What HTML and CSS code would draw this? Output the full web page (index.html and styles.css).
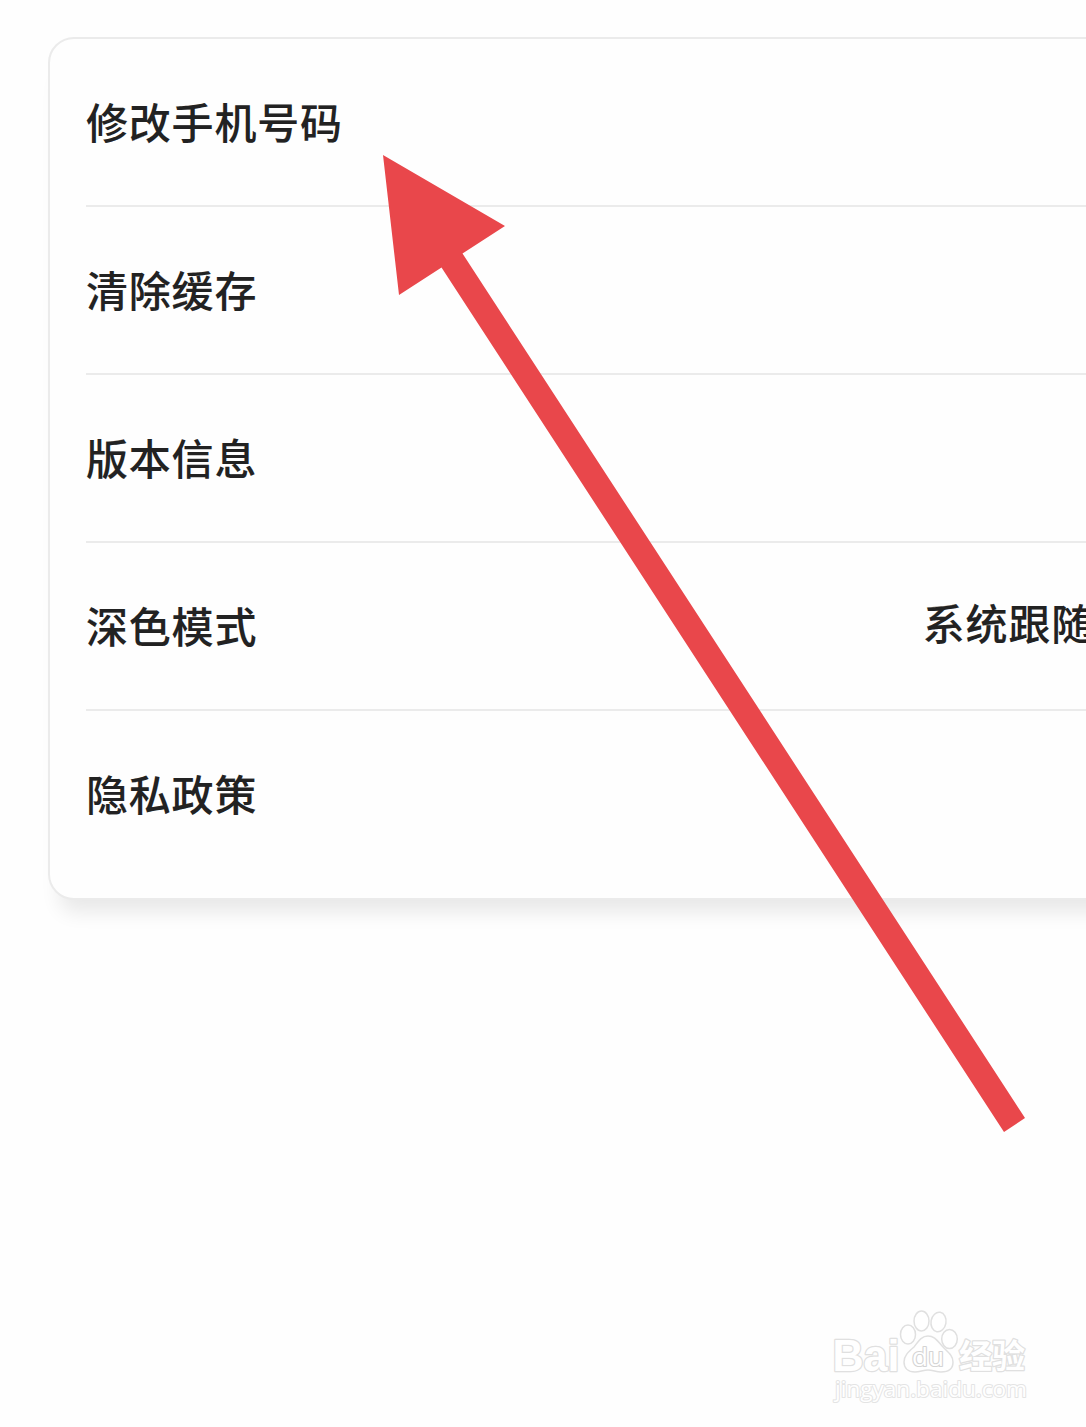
FILE: index.html
```html
<!DOCTYPE html>
<html lang="zh-CN">
<head>
  <meta charset="UTF-8">
  <meta name="viewport" content="width=device-width, initial-scale=1.0">
  <title>设置</title>
  <link rel="stylesheet" href="styles.css">
</head>
<body>

  <main class="screen">
    <ul class="settings-card">
      <li class="settings-row"><span class="row-label">修改手机号码</span></li>
      <li class="settings-row"><span class="row-label">清除缓存</span></li>
      <li class="settings-row"><span class="row-label">版本信息</span></li>
      <li class="settings-row">
        <span class="row-label">深色模式</span>
        <span class="row-value">系统跟随</span>
      </li>
      <li class="settings-row"><span class="row-label">隐私政策</span></li>
    </ul>

    <!-- Flèche -->
    <svg class="arrow" viewBox="0 0 1086 1427" aria-hidden="true">
      <path d="M383 155 L505 226 L462.500 253.500 L1025 1118 L1004 1132 L441.500 267.500 L399 295 Z"/>
    </svg>

    <!-- Logo -->
    <svg class="watermark" viewBox="0 0 220 115">
      <text x="12.500" y="71" textLength="67" lengthAdjust="spacingAndGlyphs" class="logo-latin">Bai</text>
      <text x="139" y="68" textLength="66" lengthAdjust="spacingAndGlyphs" class="logo-cjk">经验</text>
      <g class="logo-paw">
        <ellipse cx="88" cy="34.500" rx="7.500" ry="9.500"/>
        <ellipse cx="101.500" cy="21" rx="7.500" ry="10"/>
        <ellipse cx="118.500" cy="22" rx="7.500" ry="9.800" transform="rotate(10 118.500 22)"/>
        <ellipse cx="129.500" cy="39" rx="7.800" ry="9.500"/>
        <path d="M108 36 C115 36 118 42 123 47 C129 53 133 56 133 62 C133 69 128 72 121 72 C116 72 113 70 108 70 C103 70 100 72 95 72 C88 72 84 68 84 62 C84 56 88 52 94 47 C98 42 101 36 108 36 Z"/>
      </g>
      <text x="92" y="66" textLength="32" lengthAdjust="spacingAndGlyphs" class="logo-du">du</text>
      <text x="15" y="97" textLength="192" lengthAdjust="spacingAndGlyphs" class="logo-url">jingyan.baidu.com</text>
    </svg>
  </main>

</body>
</html>
```
FILE: styles.css
```css
:root {
  --text-color: #222222;
  --border-color: #ebebeb;
  --arrow-color: #e9474b;
  --background: #fefefe;
  --logo-line: #e0e0e0;
}

* {
  box-sizing: border-box;
}

body {
  margin: 0;
  background-color: var(--background);
  font-family: "Noto Sans CJK SC", sans-serif;
  color: var(--text-color);
}

.screen {
  position: relative;
  height: 1427px;
  padding: 37px 0 0 48px;
  overflow: hidden;
}

.settings-card {
  width: 1144px;
  margin: 0;
  padding: 0 36px 19px;
  list-style: none;
  background-color: var(--background);
  border: 2px solid var(--border-color);
  border-radius: 26px;
  box-shadow: 0 24px 20px -12px rgba(0, 0, 0, 0.09);
}

.settings-row {
  display: flex;
  justify-content: space-between;
  align-items: center;
  height: 168px;
  padding-bottom: 2px;
  border-bottom: 2px solid var(--border-color);
}

.settings-row:last-child {
  border-bottom: none;
  padding-bottom: 4px;
}

.row-label,
.row-value {
  font-size: 42px;
  font-weight: 500;
  line-height: 60px;
  letter-spacing: 0.8px;
  -webkit-text-stroke: 0.1px var(--text-color);
}

.row-value {
  margin-right: 60px;
  padding-bottom: 6px;
}

.arrow {
  position: absolute;
  top: 0;
  left: 0;
  width: 1086px;
  height: 1427px;
  fill: var(--arrow-color);
}

.watermark {
  position: absolute;
  top: 1300px;
  left: 820px;
  width: 220px;
  height: 115px;
  fill: #ffffff;
  stroke: var(--logo-line);
  stroke-width: 1.5px;
  stroke-linejoin: round;
}

.watermark text {
  paint-order: stroke;
}

.logo-latin {
  font-family: "Liberation Sans", sans-serif;
  font-size: 44px;
  font-weight: 700;
  stroke-width: 2.5px;
}

.logo-cjk {
  font-size: 33px;
  font-weight: 700;
  stroke-width: 2.5px;
}

.logo-du {
  font-family: "Open Sans", sans-serif;
  font-size: 25px;
  font-weight: 500;
  stroke: #d4d4d4;
  stroke-width: 2.2px;
}

.logo-url {
  font-family: "Open Sans", sans-serif;
  font-size: 22px;
  font-weight: 400;
  stroke: #e4e4e4;
  stroke-width: 2px;
}
```
